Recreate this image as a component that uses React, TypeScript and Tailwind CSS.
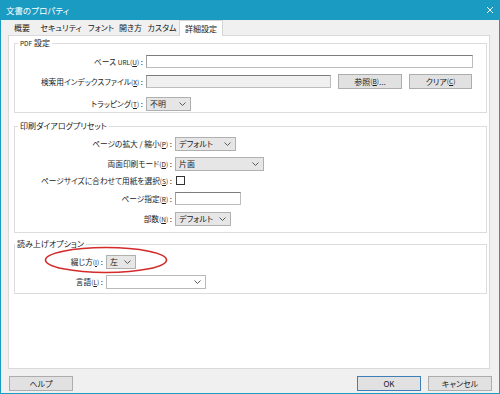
import React from 'react';

const font = "font-['Noto_Sans_CJK_JP','Noto_Sans',sans-serif] [font-feature-settings:'palt']";

// mnemonic like (U) with the letter underlined
function Mn({ k }: { k: string }) {
  return (
    <span className="text-[6.5px]">
      (<span className="underline">{k}</span>)
    </span>
  );
}

function Chevron() {
  return (
    <svg width="7" height="4" viewBox="0 0 7 4" className="shrink-0">
      <polyline points="0.5,0.5 3.5,3.5 6.5,0.5" fill="none" stroke="#5a5a5a" strokeWidth="1" />
    </svg>
  );
}

function Select({ w, text, white }: { w: string; text?: string; white?: boolean }) {
  return (
    <div
      className={`${w} h-[14px] flex items-center justify-between pl-[3px] pr-[4px] border ${
        white ? 'bg-white border-[#b9b9b9]' : 'bg-[#e6e6e6] border-[#b0b0b0]'
      }`}
    >
      <span className="leading-none">{text}</span>
      <Chevron />
    </div>
  );
}

function TextBox({ w, disabled }: { w: string; disabled?: boolean }) {
  return (
    <div
      className={`${w} h-[13px] border border-[#bdbdbd] border-t-[#7c7c7c] border-l-[#a0a0a0] ${
        disabled ? 'bg-[#f0f0f0]' : 'bg-white'
      }`}
    />
  );
}

function Button({ w, children, primary }: { w: string; children: React.ReactNode; primary?: boolean }) {
  return (
    <div
      className={`${w} h-[15px] flex items-center justify-center bg-[#e1e1e1] border leading-none ${
        primary ? 'border-[#3d7fb6]' : 'border-[#adadad]'
      }`}
    >
      {children}
    </div>
  );
}

function Row({ label, labelW, mt, children }: { label: React.ReactNode; labelW: string; mt: string; children: React.ReactNode }) {
  return (
    <div className={`flex items-center ${mt}`}>
      <div className={`${labelW} text-right text-[7.7px] leading-none whitespace-nowrap`}>{label}</div>
      <div className="ml-[3px] flex items-center">{children}</div>
    </div>
  );
}

function Group({ title, h, mt, titleLeft, children }: { title: React.ReactNode; h: string; mt: string; titleLeft: string; children: React.ReactNode }) {
  return (
    <div className={`relative ml-[5px] w-[473px] ${h} ${mt} border border-[#dcdcdc]`}>
      <span className={`absolute -top-[6px] ${titleLeft} bg-white px-[2px] leading-[10px]`}>{title}</span>
      {children}
    </div>
  );
}

const tabs = [
  { t: '概要', w: 'w-[28px]' },
  { t: 'セキュリティ', w: 'w-[50px]' },
  { t: 'フォント', w: 'w-[30px]' },
  { t: '開き方', w: 'w-[29px]' },
  { t: 'カスタム', w: 'w-[34px]' },
];

export default function App() {
  return (
    <div className={`relative w-[500px] h-[394px] flex flex-col bg-[#f0f0f0] text-[8px] text-[#1a1a1a] ${font}`}>
      {/* title bar */}
      <div className="h-[20px] shrink-0 bg-[#1a9bc2] flex items-center justify-between pl-[6px] pr-[6px] text-white">
        <span className="text-[8.5px] leading-none">文書のプロパティ</span>
        <svg width="8" height="8" viewBox="0 0 8 8">
          <path d="M1 1 L7 7 M7 1 L1 7" stroke="#fff" strokeWidth="1" />
        </svg>
      </div>

      <div className="flex-1 flex flex-col border-x border-b border-[#1a9bc2]">
        {/* tabs */}
        <div className="h-[15px] shrink-0 flex items-end pl-[7px]">
          {tabs.map((tab) => (
            <div key={tab.t} className={`${tab.w} h-[15px] flex items-center justify-center leading-none`}>
              {tab.t}
            </div>
          ))}
          <div className="relative z-10 w-[44px] h-[16px] -mb-px flex items-center justify-center bg-white border-x border-t border-[#d4d4d4] leading-none">
            詳細設定
          </div>
        </div>

        {/* page */}
        <div className="ml-[7px] w-[482px] h-[334px] shrink-0 bg-white border border-[#d9d9d9]">
          <Group
            title={<><span className="text-[6.5px]">PDF</span> 設定</>}
            h="h-[70px]"
            mt="mt-[7px]"
            titleLeft="left-[3px]"
          >
            <Row label={<>ベース <span className="text-[6.5px]">URL</span><Mn k="U" /> :</>} labelW="w-[128px]" mt="mt-[11px]">
              <TextBox w="w-[327px]" />
            </Row>
            <Row label={<>検索用インデックスファイル<Mn k="X" /> :</>} labelW="w-[128px]" mt="mt-[6px]">
              <TextBox w="w-[185px]" disabled />
              <div className="ml-[7px]">
                <Button w="w-[64px]">
                  参照<Mn k="B" />...
                </Button>
              </div>
              <div className="ml-[7px]">
                <Button w="w-[63px]">
                  クリア<Mn k="C" />
                </Button>
              </div>
            </Row>
            <Row label={<>トラッピング<Mn k="T" /> :</>} labelW="w-[128px]" mt="mt-[8px]">
              <Select w="w-[45px]" text="不明" />
            </Row>
          </Group>

          <Group title="印刷ダイアログプリセット" h="h-[107px]" mt="mt-[13px]" titleLeft="left-[3px]">
            <Row label={<>ページの拡大 / 縮小<Mn k="P" /> :</>} labelW="w-[157px]" mt="mt-[10px]">
              <Select w="w-[61px]" text="デフォルト" />
            </Row>
            <Row label={<>両面印刷モード<Mn k="D" /> :</>} labelW="w-[157px]" mt="mt-[6px]">
              <Select w="w-[89px]" text="片面" />
            </Row>
            <Row label={<>ページサイズに合わせて用紙を選択<Mn k="S" /> :</>} labelW="w-[157px]" mt="mt-[5px]">
              <div className="ml-[1px] w-[9px] h-[9px] bg-white border border-[#333]" />
            </Row>
            <Row label={<>ページ指定<Mn k="R" /> :</>} labelW="w-[157px]" mt="mt-[7px]">
              <TextBox w="w-[66px]" />
            </Row>
            <Row label={<>部数<Mn k="N" /> :</>} labelW="w-[157px]" mt="mt-[7px]">
              <Select w="w-[56px]" text="デフォルト" />
            </Row>
          </Group>

          <Group title="読み上げオプション" h="h-[50px]" mt="mt-[11px]" titleLeft="left-0">
            <Row label={<>綴じ方<Mn k="I" /> :</>} labelW="w-[88px]" mt="mt-[10px]">
              <Select w="w-[30px]" text="左" />
            </Row>
            <Row label={<>言語<Mn k="L" /> :</>} labelW="w-[88px]" mt="mt-[6px]">
              <Select w="w-[100px]" white />
            </Row>
          </Group>
        </div>

        {/* footer buttons */}
        <div className="mt-[7px] flex justify-between pl-[8px] pr-[7px]">
          <Button w="w-[64px]">ヘルプ</Button>
          <div className="flex gap-[7px]">
            <Button w="w-[64px]" primary>
              OK
            </Button>
            <Button w="w-[64px]">キャンセル</Button>
          </div>
        </div>
      </div>

      {/* red annotation ellipse */}
      <svg className="absolute left-[44px] top-[246px]" width="124" height="28" viewBox="0 0 124 28">
        <ellipse cx="62" cy="14" rx="60.5" ry="12.5" fill="none" stroke="#d42a2a" strokeWidth="1.6" />
      </svg>
    </div>
  );
}
